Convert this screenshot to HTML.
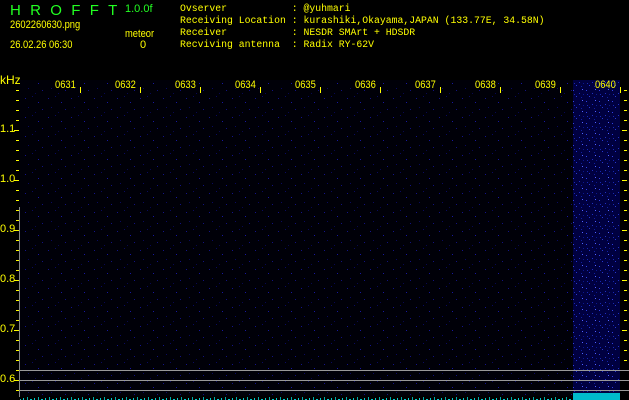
<!DOCTYPE html><html><head><style>
body{margin:0;width:629px;height:400px;background:#000;overflow:hidden;position:relative;font-family:"Liberation Sans",sans-serif}
.y{color:#ff0;position:absolute;font-size:11px;white-space:pre}
.n{transform:scaleX(0.85);transform-origin:left}
.g{color:#2f2;position:absolute}
.m{font-family:"Liberation Mono",monospace;font-size:9.8px;color:#ff0;position:absolute;white-space:pre;line-height:12px}
</style></head><body>
<div class="g" style="left:10px;top:2px;font-size:15px;letter-spacing:9.3px">HROFFT</div>
<div class="g" style="left:125px;top:3px;font-size:11px">1.0.0f</div>
<div class="y n" style="left:10px;top:19px">2602260630.png</div>
<div class="y n" style="left:125px;top:28px">meteor</div>
<div class="y n" style="left:10px;top:39px">26.02.26 06:30</div>
<div class="y" style="left:140px;top:39px">0</div>
<div class="m" style="left:180px;top:3px">Ovserver           : @yuhmari
Receiving Location : kurashiki,Okayama,JAPAN (133.77E, 34.58N)
Receiver           : NESDR SMArt + HDSDR
Recviving antenna  : Radix RY-62V</div>
<div class="y" style="left:0;top:73px;font-size:12px">kHz</div>
<svg style="position:absolute;left:0;top:0" width="629" height="400">
<defs>
<pattern id="n" width="23" height="19" patternUnits="userSpaceOnUse">
<rect width="23" height="19" fill="#000008"/>
<rect x="2" y="3" width="1" height="1" fill="#14148a"/><rect x="9" y="1" width="1" height="1" fill="#0a0a60"/>
<rect x="15" y="7" width="1" height="1" fill="#1818a0"/><rect x="5" y="12" width="1" height="1" fill="#0a0a60"/>
<rect x="19" y="14" width="1" height="1" fill="#121280"/><rect x="12" y="17" width="1" height="1" fill="#080850"/>
</pattern>
<pattern id="b" width="13" height="11" patternUnits="userSpaceOnUse">
<rect width="13" height="11" fill="#000040"/>
<rect x="1" y="2" width="1" height="1" fill="#3040e0"/><rect x="7" y="5" width="1" height="1" fill="#2030c0"/>
<rect x="10" y="1" width="1" height="1" fill="#5060ff"/><rect x="4" y="8" width="1" height="1" fill="#2838d0"/>
<rect x="9" y="9" width="1" height="1" fill="#1020a0"/><rect x="2" y="6" width="1" height="1" fill="#1828b0"/>
<rect x="11" y="6" width="1" height="1" fill="#0c1890"/>
</pattern>
<pattern id="c" width="11" height="4" patternUnits="userSpaceOnUse">
<rect x="1" y="2" width="1" height="2" fill="#0cc"/><rect x="5" y="1" width="1" height="3" fill="#0aa"/><rect x="8" y="3" width="2" height="1" fill="#0cc"/>
</pattern>
</defs>
<rect x="20" y="80" width="600" height="316" fill="url(#n)"/>
<rect x="573" y="80" width="47" height="316" fill="url(#b)"/>
<g fill="#ff0">
<rect x="80" y="87" width="1" height="6"/><rect x="140" y="87" width="1" height="6"/><rect x="200" y="87" width="1" height="6"/><rect x="260" y="87" width="1" height="6"/><rect x="320" y="87" width="1" height="6"/><rect x="380" y="87" width="1" height="6"/><rect x="440" y="87" width="1" height="6"/><rect x="500" y="87" width="1" height="6"/><rect x="560" y="87" width="1" height="6"/><rect x="620" y="87" width="1" height="6"/>
</g>
<g fill="#ff0" id="t">
<rect x="16" y="90" width="3" height="1"/><rect x="16" y="100" width="3" height="1"/><rect x="16" y="110" width="3" height="1"/><rect x="16" y="120" width="3" height="1"/><rect x="14" y="130" width="5" height="1"/><rect x="16" y="140" width="3" height="1"/><rect x="16" y="150" width="3" height="1"/><rect x="16" y="160" width="3" height="1"/><rect x="16" y="170" width="3" height="1"/><rect x="14" y="180" width="5" height="1"/><rect x="16" y="190" width="3" height="1"/><rect x="16" y="200" width="3" height="1"/><rect x="16" y="210" width="3" height="1"/><rect x="16" y="220" width="3" height="1"/><rect x="14" y="230" width="5" height="1"/><rect x="16" y="240" width="3" height="1"/><rect x="16" y="250" width="3" height="1"/><rect x="16" y="260" width="3" height="1"/><rect x="16" y="270" width="3" height="1"/><rect x="14" y="280" width="5" height="1"/><rect x="16" y="290" width="3" height="1"/><rect x="16" y="300" width="3" height="1"/><rect x="16" y="310" width="3" height="1"/><rect x="16" y="320" width="3" height="1"/><rect x="14" y="330" width="5" height="1"/><rect x="16" y="340" width="3" height="1"/><rect x="16" y="350" width="3" height="1"/><rect x="16" y="360" width="3" height="1"/><rect x="16" y="370" width="3" height="1"/><rect x="14" y="380" width="5" height="1"/><rect x="16" y="390" width="3" height="1"/>
</g>
<use href="#t" transform="translate(608,0)"/>
<rect x="19" y="207" width="1" height="190" fill="#888"/>
<rect x="20" y="370" width="609" height="1" fill="#999"/><rect x="20" y="380" width="609" height="1" fill="#999"/><rect x="20" y="390" width="609" height="1" fill="#999"/>
<rect x="20" y="396" width="600" height="4" fill="url(#c)"/>
<rect x="573" y="393" width="47" height="7" fill="#0bc"/>
</svg>
<div class="y n" style="left:55px;top:79px">0631</div><div class="y n" style="left:115px;top:79px">0632</div><div class="y n" style="left:175px;top:79px">0633</div><div class="y n" style="left:235px;top:79px">0634</div><div class="y n" style="left:295px;top:79px">0635</div><div class="y n" style="left:355px;top:79px">0636</div><div class="y n" style="left:415px;top:79px">0637</div><div class="y n" style="left:475px;top:79px">0638</div><div class="y n" style="left:535px;top:79px">0639</div><div class="y n" style="left:595px;top:79px">0640</div>
<div class="y" style="left:0;top:123px">1.1</div><div class="y" style="left:0;top:173px">1.0</div><div class="y" style="left:0;top:223px">0.9</div><div class="y" style="left:0;top:273px">0.8</div><div class="y" style="left:0;top:323px">0.7</div><div class="y" style="left:0;top:373px">0.6</div>
</body></html>
